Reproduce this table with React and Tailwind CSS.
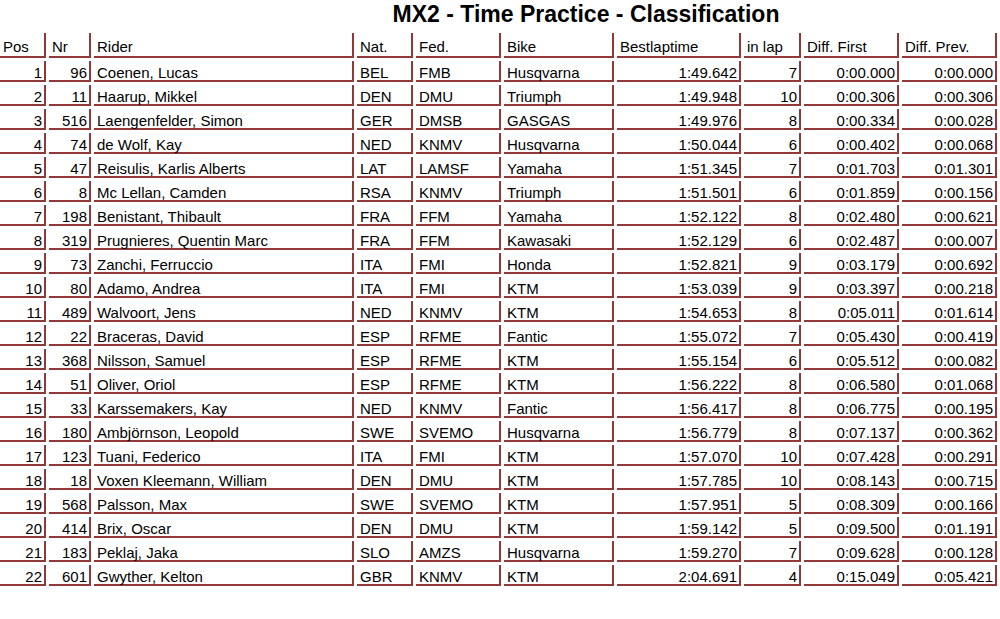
import React from "react";

const rows = [
  [1, 96, "Coenen, Lucas", "BEL", "FMB", "Husqvarna", "1:49.642", 7, "0:00.000", "0:00.000"],
  [2, 11, "Haarup, Mikkel", "DEN", "DMU", "Triumph", "1:49.948", 10, "0:00.306", "0:00.306"],
  [3, 516, "Laengenfelder, Simon", "GER", "DMSB", "GASGAS", "1:49.976", 8, "0:00.334", "0:00.028"],
  [4, 74, "de Wolf, Kay", "NED", "KNMV", "Husqvarna", "1:50.044", 6, "0:00.402", "0:00.068"],
  [5, 47, "Reisulis, Karlis Alberts", "LAT", "LAMSF", "Yamaha", "1:51.345", 7, "0:01.703", "0:01.301"],
  [6, 8, "Mc Lellan, Camden", "RSA", "KNMV", "Triumph", "1:51.501", 6, "0:01.859", "0:00.156"],
  [7, 198, "Benistant, Thibault", "FRA", "FFM", "Yamaha", "1:52.122", 8, "0:02.480", "0:00.621"],
  [8, 319, "Prugnieres, Quentin Marc", "FRA", "FFM", "Kawasaki", "1:52.129", 6, "0:02.487", "0:00.007"],
  [9, 73, "Zanchi, Ferruccio", "ITA", "FMI", "Honda", "1:52.821", 9, "0:03.179", "0:00.692"],
  [10, 80, "Adamo, Andrea", "ITA", "FMI", "KTM", "1:53.039", 9, "0:03.397", "0:00.218"],
  [11, 489, "Walvoort, Jens", "NED", "KNMV", "KTM", "1:54.653", 8, "0:05.011", "0:01.614"],
  [12, 22, "Braceras, David", "ESP", "RFME", "Fantic", "1:55.072", 7, "0:05.430", "0:00.419"],
  [13, 368, "Nilsson, Samuel", "ESP", "RFME", "KTM", "1:55.154", 6, "0:05.512", "0:00.082"],
  [14, 51, "Oliver, Oriol", "ESP", "RFME", "KTM", "1:56.222", 8, "0:06.580", "0:01.068"],
  [15, 33, "Karssemakers, Kay", "NED", "KNMV", "Fantic", "1:56.417", 8, "0:06.775", "0:00.195"],
  [16, 180, "Ambjörnson, Leopold", "SWE", "SVEMO", "Husqvarna", "1:56.779", 8, "0:07.137", "0:00.362"],
  [17, 123, "Tuani, Federico", "ITA", "FMI", "KTM", "1:57.070", 10, "0:07.428", "0:00.291"],
  [18, 18, "Voxen Kleemann, William", "DEN", "DMU", "KTM", "1:57.785", 10, "0:08.143", "0:00.715"],
  [19, 568, "Palsson, Max", "SWE", "SVEMO", "KTM", "1:57.951", 5, "0:08.309", "0:00.166"],
  [20, 414, "Brix, Oscar", "DEN", "DMU", "KTM", "1:59.142", 5, "0:09.500", "0:01.191"],
  [21, 183, "Peklaj, Jaka", "SLO", "AMZS", "Husqvarna", "1:59.270", 7, "0:09.628", "0:00.128"],
  [22, 601, "Gwyther, Kelton", "GBR", "KNMV", "KTM", "2:04.691", 4, "0:15.049", "0:05.421"],
];

const headers = ["Pos", "Nr", "Rider", "Nat.", "Fed.", "Bike", "Bestlaptime", "in lap", "Diff. First", "Diff. Prev."];
// columns that are right aligned in the body
const rightCols = [0, 1, 6, 7, 8, 9];

export default function App() {
  return (
    <div className="w-[1000px] h-[619px] bg-white text-black font-['Liberation_Sans',Arial,sans-serif] overflow-hidden">
      <div className="h-[33px] pt-[1px] pl-[172px] text-center">
        <h1 className="text-[23px] leading-[27px] font-bold">MX2 - Time Practice - Classification</h1>
      </div>

      <div className="grid grid-cols-[46px_42px_260px_56px_85px_110px_124px_57px_95px_95px] gap-[3px] text-[15px]">
        {headers.map((h) => (
          <div
            key={h}
            className="h-[25px] flex items-end px-[3px] pb-[1px] leading-[17px] border-r-2 border-b-2 border-[#933838]"
          >
            {h}
          </div>
        ))}

        {rows.map((r) =>
          r.map((val, i) => (
            <div
              key={`${r[0]}-${i}`}
              className={
                "h-[21px] flex items-end px-[2px] leading-[15px] whitespace-nowrap border-r-2 border-b-2 border-[#933838] " +
                (rightCols.includes(i) ? "justify-end" : "justify-start pl-[3px]")
              }
            >
              {val}
            </div>
          ))
        )}
      </div>
    </div>
  );
}
